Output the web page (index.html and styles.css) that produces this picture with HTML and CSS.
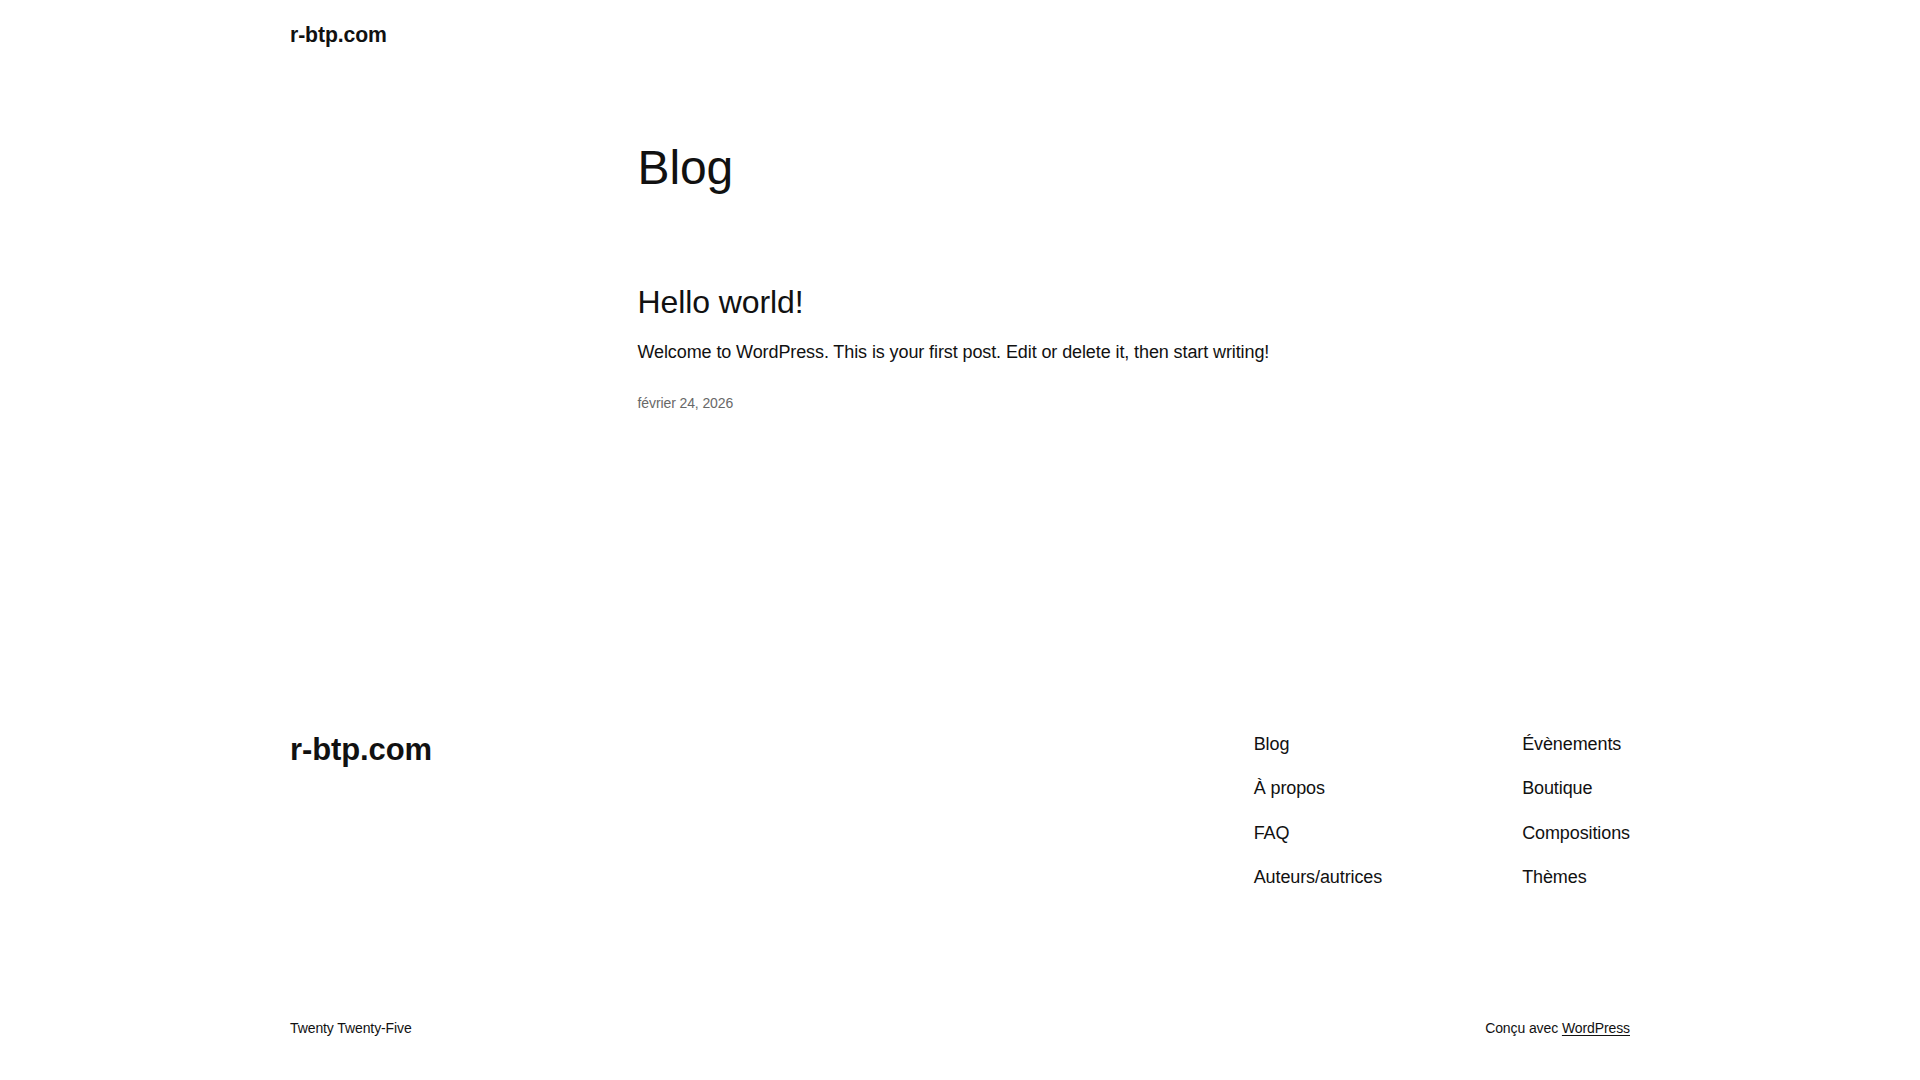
FILE: index.html
```html
<!DOCTYPE html>
<html lang="fr">
<head>
<meta charset="utf-8">
<title>Blog – r-btp.com</title>
<link rel="stylesheet" href="styles.css">
</head>
<body>
<div class="page">
  <header class="site-header">
    <a class="site-title" href="#">r-btp.com</a>
  </header>

  <main class="site-main">
    <h1 class="page-title">Blog</h1>
    <article class="post">
      <h2 class="post-title"><a href="#">Hello world!</a></h2>
      <p class="post-excerpt">Welcome to WordPress. This is your first post. Edit or delete it, then start writing!</p>
      <div class="post-date">février 24, 2026</div>
    </article>
  </main>

  <footer class="site-footer">
    <div class="footer-top">
      <a class="footer-title" href="#">r-btp.com</a>
      <div class="footer-navs">
        <nav class="footer-nav">
          <a href="#">Blog</a>
          <a href="#">À propos</a>
          <a href="#">FAQ</a>
          <a href="#">Auteurs/autrices</a>
        </nav>
        <nav class="footer-nav">
          <a href="#">Évènements</a>
          <a href="#">Boutique</a>
          <a href="#">Compositions</a>
          <a href="#">Thèmes</a>
        </nav>
      </div>
    </div>
    <div class="footer-bottom">
      <span>Twenty Twenty-Five</span>
      <span>Conçu avec <a class="wp-link" href="#">WordPress</a></span>
    </div>
  </footer>
</div>
</body>
</html>
```

FILE: styles.css
```css
html, body {
  margin: 0;
  padding: 0;
  background: #ffffff;
}

body {
  font-family: "Liberation Sans", Arial, sans-serif;
  color: #111111;
  font-size: 18px;
  line-height: 1.4;
  letter-spacing: -0.1px;
}

a {
  color: inherit;
  text-decoration: none;
}

.page {
  width: 1340px;
  margin: 0 auto;
}

.site-header {
  padding-top: 20px;
}

.site-title {
  display: block;
  font-weight: 700;
  font-size: 21.2px;
  line-height: 29.4px;
}

.site-main {
  width: 645px;
  margin: 0 auto;
  padding-top: 91.5px;
}

.page-title {
  margin: 0;
  font-weight: 400;
  font-size: 48px;
  line-height: 54px;
}

.post-title {
  margin: 89.5px 0 0;
  font-weight: 400;
  font-size: 32px;
  line-height: 36px;
}

.post-excerpt {
  margin: 19.5px 0 0;
  font-size: 18px;
  line-height: 25.2px;
}

.post-date {
  margin-top: 29px;
  font-size: 14px;
  line-height: 19.6px;
  color: #686868;
}

.site-footer {
  margin-top: 318.5px;
}

.footer-top {
  display: flex;
  justify-content: space-between;
  align-items: flex-start;
}

.footer-title {
  display: block;
  font-weight: 700;
  font-size: 31px;
  line-height: 36px;
}

.footer-navs {
  display: flex;
  gap: 140px;
}

.footer-nav {
  display: flex;
  flex-direction: column;
  gap: 19px;
  font-size: 18px;
  line-height: 25.2px;
}

.footer-bottom {
  margin-top: 129px;
  display: flex;
  justify-content: space-between;
  font-size: 14px;
  line-height: 19.6px;
}

.wp-link {
  text-decoration: underline;
  text-underline-offset: 2px;
}
```
